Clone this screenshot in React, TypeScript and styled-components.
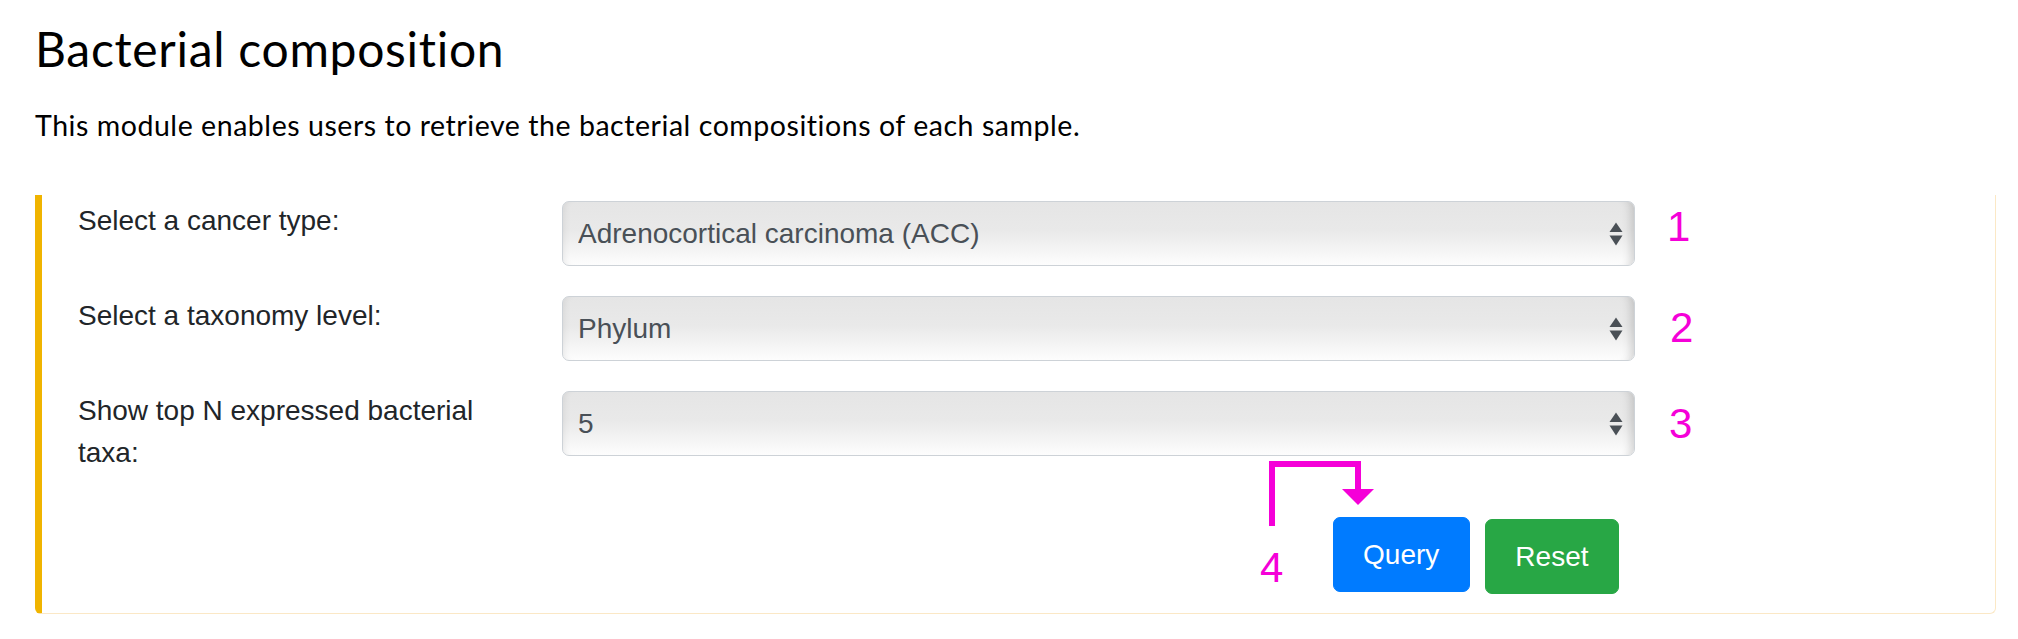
import React from "react";
import styled, { createGlobalStyle } from "styled-components";

const GlobalStyle = createGlobalStyle`
  html, body { margin: 0; padding: 0; background: #ffffff; }
  body { font-family: "Liberation Sans", Arial, Helvetica, sans-serif; color: #212529; }
  *, *::before, *::after { box-sizing: border-box; }
`;

const Page = styled.div`
  position: relative;
  width: 2018px;
  height: 639px;
  overflow: hidden;
  padding: 20px 22px 0 35px;
`;

const Title = styled.h2`
  margin: 0;
  font-family: Lato, "Open Sans", sans-serif;
  font-weight: 400;
  font-size: 48px;
  letter-spacing: 0.7px;
  line-height: 57.6px;
  color: #000000;
`;

const Intro = styled.p`
  margin: 26.4px 0 48.7px;
  font-family: Lato, "Open Sans", sans-serif;
  font-size: 28.5px;
  letter-spacing: 0.55px;
  line-height: 42.75px;
  color: #000000;
`;

const Card = styled.section`
  display: grid;
  grid-template-columns: 484px 1fr;
  row-gap: 29px;
  align-items: start;
  padding: 5px 360px 19px 36px;
  border-left: 7px solid #f0b400;
  border-right: 1px solid #fbe8c6;
  border-bottom: 1px solid #fbe8c6;
  border-radius: 0 0 6px 6px;
`;

const Label = styled.label`
  font-size: 28px;
  line-height: 42px;
  color: #212529;
  padding-right: 30px;
`;

const SelectWrap = styled.div`
  position: relative;
  margin-top: 1px;
`;

const Select = styled.select`
  appearance: none;
  -webkit-appearance: none;
  display: block;
  width: 100%;
  height: 65px;
  margin: 0;
  padding: 0 48px 0 15px;
  font-family: "Liberation Sans", Arial, Helvetica, sans-serif;
  font-size: 28px;
  color: #495057;
  border: 1px solid #cdd2d7;
  border-radius: 7px;
  background: linear-gradient(180deg, #e5e5e5 0%, #e9e9e9 45%, #f5f5f5 78%, #fdfdfd 100%);
  box-shadow: inset -12px 0 10px -9px rgba(0, 0, 0, 0.16),
    inset 7px 0 7px -6px rgba(0, 0, 0, 0.08);
  outline: none;
`;

const Arrows = styled.svg`
  position: absolute;
  right: 12px;
  top: 50%;
  width: 14px;
  height: 24px;
  transform: translateY(-50%);
  pointer-events: none;
`;

const Actions = styled.div`
  grid-column: 2;
  display: flex;
  justify-content: flex-end;
  align-items: flex-start;
  gap: 15px;
  margin-top: 14px;
  padding-right: 16px;
`;

const Button = styled.button<{ $tone: "primary" | "success"; $shift?: number }>`
  margin-top: ${(p) => p.$shift ?? 0}px;
  padding: 15.5px 29.5px;
  font-family: "Liberation Sans", Arial, Helvetica, sans-serif;
  font-size: 28px;
  line-height: 42px;
  color: #ffffff;
  background: ${(p) => (p.$tone === "primary" ? "#007bff" : "#28a745")};
  border: 1px solid ${(p) => (p.$tone === "primary" ? "#007bff" : "#28a745")};
  border-radius: 7px;
  cursor: pointer;
`;

const Mark = styled.span<{ $x: number; $y: number }>`
  position: absolute;
  left: ${(p) => p.$x}px;
  top: ${(p) => p.$y}px;
  font-family: "Liberation Sans", Arial, Helvetica, sans-serif;
  font-size: 42px;
  line-height: 42px;
  color: #f500d8;
`;

const Pointer = styled.svg`
  position: absolute;
  left: 1260px;
  top: 455px;
  width: 120px;
  height: 80px;
  overflow: visible;
`;

const ArrowIcon = () => (
  <Arrows viewBox="0 0 14 24">
    <path d="M7 0.5 L13.5 10 H0.5 Z" fill="#4a5056" />
    <path d="M0.5 13.5 H13.5 L7 23.5 Z" fill="#4a5056" />
  </Arrows>
);

type Field = { label: string; options: string[] };

const fields: Field[] = [
  {
    label: "Select a cancer type:",
    options: ["Adrenocortical carcinoma (ACC)", "Bladder urothelial carcinoma (BLCA)", "Breast invasive carcinoma (BRCA)"],
  },
  {
    label: "Select a taxonomy level:",
    options: ["Phylum", "Class", "Order", "Family", "Genus", "Species"],
  },
  {
    label: "Show top N expressed bacterial taxa:",
    options: ["5", "10", "15", "20"],
  },
];

const marks = [
  { text: "1", x: 1667, y: 206 },
  { text: "2", x: 1670, y: 307 },
  { text: "3", x: 1669, y: 403 },
  { text: "4", x: 1260, y: 547 },
];

export default function App() {
  return (
    <>
      <GlobalStyle />
      <Page>
        <Title>Bacterial composition</Title>
        <Intro>This module enables users to retrieve the bacterial compositions of each sample.</Intro>
        <Card>
          {fields.map((f) => (
            <React.Fragment key={f.label}>
              <Label>{f.label}</Label>
              <SelectWrap>
                <Select defaultValue={f.options[0]}>
                  {f.options.map((o) => (
                    <option key={o} value={o}>
                      {o}
                    </option>
                  ))}
                </Select>
                <ArrowIcon />
              </SelectWrap>
            </React.Fragment>
          ))}
          <Actions>
            <Button $tone="primary" type="button">Query</Button>
            <Button $tone="success" $shift={2} type="button">Reset</Button>
          </Actions>
        </Card>
        {marks.map((m) => (
          <Mark key={m.text} $x={m.x} $y={m.y}>
            {m.text}
          </Mark>
        ))}
        <Pointer viewBox="0 0 120 80">
          <path d="M12 71 V9 H98 V35" fill="none" stroke="#f500d8" strokeWidth="6" strokeLinejoin="miter" />
          <path d="M82 34 H114 L98 50 Z" fill="#f500d8" />
        </Pointer>
      </Page>
    </>
  );
}
